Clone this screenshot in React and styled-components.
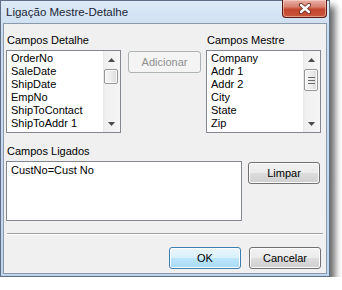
import React from "react";
import styled, { createGlobalStyle } from "styled-components";

const GlobalStyle = createGlobalStyle`
  html, body {
    margin: 0;
    padding: 0;
    background: #ffffff;
  }
  body {
    font-family: "Liberation Sans", Arial, sans-serif;
    font-size: 11px;
    color: #000;
  }
  * {
    box-sizing: border-box;
  }
`;

// Window frame ---------------------

const Window = styled.div`
  width: 330px;
  height: 277px;
  display: flex;
  flex-direction: column;
  border: 1px solid #5e6f86;
  background: linear-gradient(180deg, #dde9f6 0%, #c9dcf1 12%, #bed4ec 100%);
  padding: 0 2px 2px 2px;
  box-shadow: 5px 6px 7px rgba(0, 0, 0, 0.6);
`;

const TitleBar = styled.div`
  height: 22px;
  display: flex;
  justify-content: space-between;
  align-items: flex-start;
`;

const Title = styled.span`
  padding-left: 3px;
  line-height: 22px;
  font-size: 11.5px;
  color: #1b2636;
`;

const CloseButton = styled.div`
  width: 45px;
  height: 18px;
  margin-top: -1px;
  border: 1px solid #5a1a14;
  border-top: none;
  border-radius: 0 0 4px 4px;
  background: linear-gradient(180deg, #e8b2a8 0%, #d8806f 40%, #c4472f 55%, #c9553c 100%);
  box-shadow: inset 0 0 0 1px rgba(255, 220, 210, 0.5);
  display: flex;
  align-items: center;
  justify-content: center;
`;

const Client = styled.div`
  flex: 1;
  border: 1px solid #8b99ab;
  background: #f0f0f0;
  padding: 10px 0 0 2px;
  display: flex;
  flex-direction: column;
`;

// Layout rows ---------------------

const Row = styled.div`
  display: flex;
  align-items: flex-start;
  margin-top: ${(p) => p.$top || 0}px;
`;

const Column = styled.div`
  display: flex;
  flex-direction: column;
  width: ${(p) => p.$width}px;
  margin-left: ${(p) => p.$left || 0}px;
`;

const Label = styled.div`
  height: 13px;
  line-height: 13px;
  padding-left: 1px;
  margin-bottom: 3px;
  color: #000;
`;

const ButtonSlot = styled.div`
  margin-left: ${(p) => p.$left}px;
  padding-top: ${(p) => p.$top}px;
`;

// List boxes ---------------------

const ListBox = styled.div`
  height: ${(p) => p.$height}px;
  border: 1px solid #828790;
  background: #fff;
  display: flex;
  overflow: hidden;
`;

const Items = styled.div`
  flex: 1;
  padding: ${(p) => p.$pad || "1px 0 0 4px"};
  overflow: hidden;
`;

const Item = styled.div`
  height: 13px;
  line-height: 13px;
  white-space: nowrap;
`;

const ScrollBar = styled.div`
  width: 17px;
  display: flex;
  flex-direction: column;
  background: linear-gradient(90deg, #e6e6e6 0px, #f0f0f0 2px, #f5f5f5 100%);
`;

const ArrowBox = styled.div`
  height: 17px;
  display: flex;
  align-items: center;
  justify-content: center;
`;

const Track = styled.div`
  flex: 1;
`;

const Thumb = styled.div`
  margin: ${(p) => p.$top}px 2px 0 1px;
  height: ${(p) => p.$height}px;
  border: 1px solid #979797;
  border-radius: 2px;
  background: linear-gradient(90deg, #f6f6f6 0%, #ececec 50%, #dadada 100%);
  box-shadow: inset 0 0 0 1px #fafafa;
  display: flex;
  align-items: center;
  justify-content: center;
`;

// Buttons ---------------------

const Button = styled.div`
  width: ${(p) => p.$width || 72}px;
  height: 22px;
  border: 1px solid ${(p) => (p.$default ? "#3c7fb1" : p.$disabled ? "#adb2b5" : "#707070")};
  border-radius: 3px;
  display: flex;
  align-items: center;
  justify-content: center;
  color: ${(p) => (p.$disabled ? "#8f8f8f" : "#000")};
  background: ${(p) =>
    p.$disabled
      ? "#f4f4f4"
      : p.$default
      ? "linear-gradient(180deg, #eaf6fd 0%, #d9f0fc 50%, #bee6fd 50%, #a7d9f5 100%)"
      : "linear-gradient(180deg, #f2f2f2 0%, #ebebeb 50%, #dddddd 50%, #cfcfcf 100%)"};
  box-shadow: inset 0 0 0 1px ${(p) => (p.$disabled ? "#f4f4f4" : "#fcfcfc")};
`;

const Separator = styled.div`
  margin: 12px 0 0 1px;
  width: 316px;
  border-top: 1px solid #a0a0a0;
  border-bottom: 1px solid #ffffff;
`;

const Footer = styled.div`
  display: flex;
  justify-content: flex-end;
  gap: 8px;
  margin-top: 12px;
  padding-right: 5px;
`;

// Drawings ---------------------

const CloseGlyph = () => (
  <svg width="14" height="11" viewBox="0 0 14 11">
    <path d="M3 2 L11 9 M11 2 L3 9" stroke="#6a2a22" strokeWidth="4.2" strokeLinecap="round" />
    <path d="M3 2 L11 9 M11 2 L3 9" stroke="#ffffff" strokeWidth="2.4" strokeLinecap="round" />
  </svg>
);

const Arrow = ({ down }) => (
  <svg width="7" height="4" viewBox="0 0 7 4">
    <polygon points={down ? "0,0 7,0 3.5,4" : "0,4 7,4 3.5,0"} fill="#4a4a4a" />
  </svg>
);

const Grip = () => (
  <svg width="7" height="7" viewBox="0 0 7 7">
    <rect x="0" y="0" width="7" height="1" fill="#6b6b6b" />
    <rect x="0" y="3" width="7" height="1" fill="#6b6b6b" />
    <rect x="0" y="6" width="7" height="1" fill="#6b6b6b" />
  </svg>
);

const ScrollList = ({ items, thumbHeight, grip }) => (
  <ListBox $height={83}>
    <Items>
      {items.map((t) => (
        <Item key={t}>{t}</Item>
      ))}
    </Items>
    <ScrollBar>
      <ArrowBox>
        <Arrow />
      </ArrowBox>
      <Track>
        <Thumb $top={1} $height={thumbHeight}>
          {grip && <Grip />}
        </Thumb>
      </Track>
      <ArrowBox>
        <Arrow down />
      </ArrowBox>
    </ScrollBar>
  </ListBox>
);

const detailFields = [
  "OrderNo",
  "SaleDate",
  "ShipDate",
  "EmpNo",
  "ShipToContact",
  "ShipToAddr 1",
  "ShipToAddr 2",
];

const masterFields = ["Company", "Addr 1", "Addr 2", "City", "State", "Zip"];

export default function App() {
  return (
    <>
      <GlobalStyle />
      <Window>
        <TitleBar>
          <Title>Ligação Mestre-Detalhe</Title>
          <CloseButton>
            <CloseGlyph />
          </CloseButton>
        </TitleBar>
        <Client>
          <Row>
            <Column $width={115}>
              <Label>Campos Detalhe</Label>
              <ScrollList items={detailFields} thumbHeight={15} />
            </Column>
            <ButtonSlot $left={7} $top={17}>
              <Button $width={73} $disabled>
                Adicionar
              </Button>
            </ButtonSlot>
            <Column $width={115} $left={5}>
              <Label>Campos Mestre</Label>
              <ScrollList items={masterFields} thumbHeight={22} grip />
            </Column>
          </Row>
          <Row $top={12}>
            <Column $width={236}>
              <Label>Campos Ligados</Label>
              <ListBox $height={60}>
                <Items $pad="2px 0 0 4px">
                  <Item>CustNo=Cust No</Item>
                </Items>
              </ListBox>
            </Column>
            <ButtonSlot $left={6} $top={17}>
              <Button>Limpar</Button>
            </ButtonSlot>
          </Row>
          <Separator />
          <Footer>
            <Button $default>OK</Button>
            <Button>Cancelar</Button>
          </Footer>
        </Client>
      </Window>
    </>
  );
}
